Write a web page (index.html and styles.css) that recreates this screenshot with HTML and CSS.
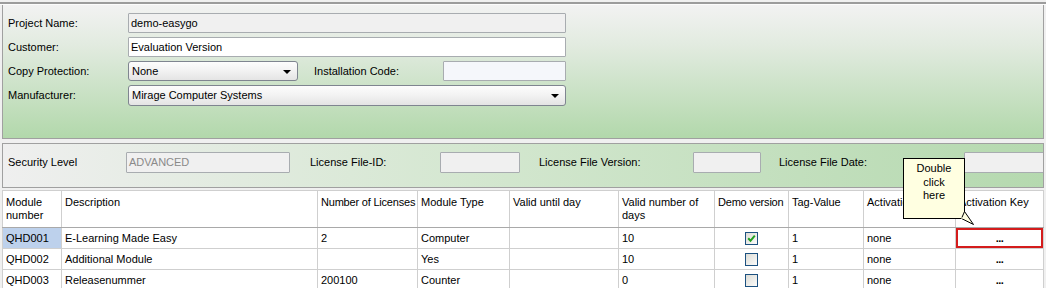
FILE: index.html
```html
<!DOCTYPE html>
<html lang="en">
<head>
  <meta charset="UTF-8">
  <title>License Editor</title>
  <link rel="stylesheet" href="styles.css">
</head>
<body>
  <div class="top-rule"></div>

  <!-- Project data -->
  <div class="form-panel">
    <div class="form-row">
      <span class="label">Project Name:</span>
      <div class="field field-disabled wide">demo-easygo</div>
    </div>
    <div class="form-row">
      <span class="label">Customer:</span>
      <div class="field wide">Evaluation Version</div>
    </div>
    <div class="form-row">
      <span class="label">Copy Protection:</span>
      <div class="select short">None<span class="arrow"></span></div>
      <span class="label-inline">Installation Code:</span>
      <div class="field field-code"></div>
    </div>
    <div class="form-row">
      <span class="label">Manufacturer:</span>
      <div class="select wide">Mirage Computer Systems<span class="arrow"></span></div>
    </div>
  </div>

  <!-- License info -->
  <div class="info-panel">
    <span class="info-label l1">Security Level</span>
    <div class="field field-disabled grey-text f1">ADVANCED</div>
    <span class="info-label l2">License File-ID:</span>
    <div class="field field-disabled f2"></div>
    <span class="info-label l3">License File Version:</span>
    <div class="field field-disabled f3"></div>
    <span class="info-label l4">License File Date:</span>
    <div class="field field-disabled f4"></div>
  </div>

  <!-- Modules -->
  <table class="modules">
    <colgroup>
      <col style="width:59px"><col style="width:256px"><col style="width:100px"><col style="width:92px">
      <col style="width:109px"><col style="width:96px"><col style="width:74px"><col style="width:75px">
      <col style="width:92px"><col style="width:88px">
    </colgroup>
    <thead>
      <tr>
        <th class="wrap">Module number</th>
        <th>Description</th>
        <th class="tight">Number of Licenses</th>
        <th>Module Type</th>
        <th>Valid until day</th>
        <th class="wrap">Valid number of days</th>
        <th class="tight">Demo version</th>
        <th>Tag-Value</th>
        <th>Activation Type</th>
        <th>Activation Key</th>
      </tr>
    </thead>
    <tbody>
      <tr>
        <td class="selected">QHD001</td>
        <td>E-Learning Made Easy</td>
        <td>2</td>
        <td>Computer</td>
        <td></td>
        <td>10</td>
        <td class="center"><span class="check"><svg width="9" height="9" viewBox="0 0 9 9"><path d="M1.2 4.3 L3.5 6.8 L7.8 1.6" fill="none" stroke="#21a121" stroke-width="2"/></svg></span></td>
        <td>1</td>
        <td>none</td>
        <td class="key focused">...</td>
      </tr>
      <tr>
        <td>QHD002</td>
        <td>Additional Module</td>
        <td></td>
        <td>Yes</td>
        <td></td>
        <td>10</td>
        <td class="center"><span class="check"></span></td>
        <td>1</td>
        <td>none</td>
        <td class="key">...</td>
      </tr>
      <tr>
        <td>QHD003</td>
        <td>Releasenummer</td>
        <td>200100</td>
        <td>Counter</td>
        <td></td>
        <td>0</td>
        <td class="center"><span class="check"></span></td>
        <td>1</td>
        <td>none</td>
        <td class="key">...</td>
      </tr>
    </tbody>
  </table>

  <!-- Tooltip -->
  <div class="tooltip">Double<br>click<br>here</div>
  <svg class="tooltip-tail" width="16" height="16" viewBox="0 0 16 16">
    <polygon points="0.5,7.5 3.5,0.5 12.5,13.5" fill="#ffffe1" stroke="#000" stroke-width="1"/>
    <line x1="0" y1="7" x2="4" y2="7" stroke="#ffffe1" stroke-width="1"/>
  </svg>
</body>
</html>
```

FILE: styles.css
```css
/* General */
body {
  margin: 0;
  background: #f0f0f0;
  font-family: 'Liberation Sans', Arial, sans-serif;
  font-size: 11px;
  color: #000;
  width: 1046px;
  height: 288px;
  overflow: hidden;
}

.top-rule {
  margin-top: 2px;
  border-top: 2px solid #9c9c9c;
  border-bottom: 1px solid #fcfcfc;
}

/* Project panel */
.form-panel {
  margin: 0 2px 0 2px;
  height: 125px;
  padding: 8px 0 0 5px;
  border: 1px solid #a0a0a0;
  border-top: none;
  background: linear-gradient(#f2f2f2, #e2ebe0 30%, #b2d8ab);
  display: flex;
  flex-direction: column;
  gap: 4px;
}

.form-row {
  display: flex;
  align-items: center;
  height: 20px;
}

.label {
  width: 120px;
  flex-shrink: 0;
}

.label-inline {
  margin-left: 16px;
  width: 129px;
  flex-shrink: 0;
}

.field {
  height: 20px;
  box-sizing: border-box;
  border: 1px solid #a8acb0;
  background: #fff;
  padding: 0 2px;
  line-height: 18px;
  border-radius: 1px;
  flex-shrink: 0;
}

.field-disabled {
  background: #f0f0f0;
}

.field-code {
  width: 123px;
  background: #f5f7fb;
}

.wide {
  width: 438px;
}

.short {
  width: 170px;
}

.select {
  position: relative;
  height: 20px;
  box-sizing: border-box;
  border: 1px solid #7f8590;
  border-radius: 3px;
  background: linear-gradient(#fdfdfd, #f2f2f2 50%, #e4e4e4);
  padding: 0 3px;
  line-height: 18px;
  flex-shrink: 0;
}

.select:last-child {
  height: 21px;
}

.arrow {
  position: absolute;
  right: 6px;
  top: 8px;
  border-left: 4px solid transparent;
  border-right: 4px solid transparent;
  border-top: 4px solid #000;
}

/* Info panel */
.info-panel {
  margin: 4px 2px 0 2px;
  height: 35px;
  padding: 8px 0 0 5px;
  border: 1px solid #a0a0a0;
  background: linear-gradient(90deg, #efefef, #d4e7d0 45%, #b5d9af);
  display: flex;
  align-items: flex-start;
  overflow: hidden;
}

.info-label {
  line-height: 21px;
  white-space: nowrap;
  flex-shrink: 0;
}

.info-panel .field {
  height: 21px;
  line-height: 19px;
}

.grey-text {
  color: #8a8a8a;
}

.l1 { width: 118px; }
.f1 { width: 164px; }
.l2 { margin-left: 20px; width: 130px; }
.f2 { width: 80px; }
.l3 { margin-left: 19px; width: 154px; }
.f3 { width: 68px; }
.l4 { margin-left: 18px; width: 185px; }
.f4 { width: 90px; }

/* Modules table */
.modules {
  margin: 2px 0 0 2px;
  width: 1042px;
  table-layout: fixed;
  border-collapse: collapse;
  background: #fff;
  border: 1px solid #a0a0a0;
}

.modules th,
.modules td {
  border: 1px solid #cfcfcf;
  padding: 0 3px;
  text-align: left;
  font-weight: normal;
  overflow: hidden;
  white-space: nowrap;
}

.modules th {
  height: 31px;
  vertical-align: top;
  padding-top: 5px;
  line-height: 13px;
  border-bottom-color: #a9a9a9;
}

.modules th.wrap {
  white-space: normal;
}

.modules th.tight {
  letter-spacing: -0.2px;
}

.modules td {
  height: 20px;
}

.selected {
  background: #bdd1ec;
}

.modules .center {
  text-align: center;
}

.modules .key {
  text-align: center;
  font-weight: bold;
  letter-spacing: -0.5px;
}

.focused {
  box-shadow: inset 0 0 0 2px #d41c1c;
}

.check {
  display: inline-block;
  width: 13px;
  height: 13px;
  box-sizing: border-box;
  border: 1px solid #1c5180;
  background: linear-gradient(135deg, #dcdcd6, #fbfbfa);
  vertical-align: middle;
  position: relative;
}

.check svg {
  position: absolute;
  left: 1px;
  top: 1px;
}

/* Tooltip */
.tooltip {
  position: absolute;
  left: 903px;
  top: 158px;
  width: 60px;
  height: 56px;
  padding-top: 3px;
  background: #ffffe1;
  border: 1px solid #000;
  text-align: center;
  line-height: 13.5px;
  font-size: 11px;
}

.tooltip-tail {
  position: absolute;
  left: 961px;
  top: 211px;
}
```
